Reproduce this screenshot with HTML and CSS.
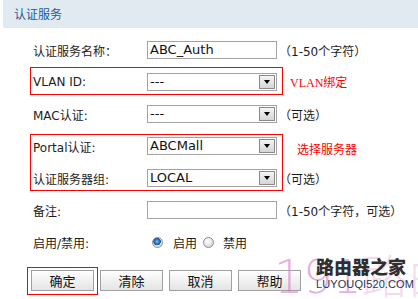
FILE: index.html
```html
<!DOCTYPE html>
<html>
<head>
<meta charset="utf-8">
<link rel="stylesheet" href="styles.css">
</head>
<body>
<div class="page">
  <div class="header">认证服务</div>
  <div class="form">
    <div class="row">
      <span class="label">认证服务名称：</span>
      <span class="field">ABC_Auth</span>
      <span class="note">（1-50个字符）</span>
    </div>
    <div class="row">
      <span class="label">VLAN ID:</span>
      <span class="field select">---<i class="arrow"></i></span>
      <span class="tip tip-vlan"><span class="tip-en">VLAN</span>绑定</span>
    </div>
    <div class="row">
      <span class="label">MAC认证:</span>
      <span class="field select">---<i class="arrow"></i></span>
      <span class="note">（可选）</span>
    </div>
    <div class="row">
      <span class="label">Portal认证:</span>
      <span class="field select">ABCMall<i class="arrow"></i></span>
      <span class="tip tip-server">选择服务器</span>
    </div>
    <div class="row">
      <span class="label">认证服务器组:</span>
      <span class="field select">LOCAL<i class="arrow"></i></span>
      <span class="note">（可选）</span>
    </div>
    <div class="row">
      <span class="label">备注:</span>
      <span class="field"></span>
      <span class="note">（1-50个字符，可选）</span>
    </div>
    <div class="row">
      <span class="label">启用/禁用:</span>
      <span class="radio checked"></span><span class="radio-text">启用</span>
      <span class="radio"></span><span class="radio-text">禁用</span>
    </div>
    <div class="buttons">
      <span class="btn">确定</span>
      <span class="btn">清除</span>
      <span class="btn">取消</span>
      <span class="btn">帮助</span>
    </div>
  </div>
  <div class="mark mark-vlan"></div>
  <div class="mark mark-portal"></div>
  <div class="mark mark-ok"></div>
  <div class="wm">191<span class="wm-cn">路由网</span></div>
  <div class="logo">
    <div class="logo-cn">路由器之家</div>
    <div class="logo-en">LUYOUQI520.COM</div>
  </div>
</div>
</body>
</html>
```
FILE: styles.css
```css
* { box-sizing: border-box; }
html, body { margin: 0; padding: 0; background: #fff; }
body {
  font-family: "DejaVu Sans", "Noto Sans CJK SC", sans-serif;
  font-size: 12px;
  color: #1c1c1c;
}
.page {
  position: relative;
  width: 418px;
  height: 299px;
  overflow: hidden;
}
.header {
  margin-left: 3px;
  height: 28px;
  line-height: 28px;
  padding-left: 11px;
  background: #e2eaf1;
  color: #1f5b94;
  font-family: "Noto Sans CJK SC", sans-serif;
  font-size: 12px;
}
.form {
  display: flex;
  flex-direction: column;
  gap: 14px;
  margin-top: 13px;
}
.row {
  display: flex;
  align-items: center;
  height: 18px;
  padding-left: 33px;
}
.label {
  flex: none;
  width: 114px;
  white-space: nowrap;
}
.field {
  flex: none;
  position: relative;
  width: 130px;
  height: 18px;
  border: 1px solid #a3a3a3;
  background: #fff;
  padding-left: 2px;
  line-height: 16px;
  font-size: 13px;
  color: #111;
}
.arrow {
  position: absolute;
  top: 1px;
  right: 1px;
  width: 16px;
  height: 14px;
  border: 1px solid #8a8a8a;
  background: linear-gradient(#f4f4f4, #d6d6d6);
}
.arrow::after {
  content: "";
  position: absolute;
  left: 4px;
  top: 4px;
  border-left: 3.5px solid transparent;
  border-right: 3.5px solid transparent;
  border-top: 4px solid #000;
}
.note {
  margin-left: 2px;
  white-space: nowrap;
}
.tip {
  color: #f00;
  white-space: nowrap;
  font-family: "Noto Sans CJK SC", sans-serif;
}
.tip-en { font-family: "Liberation Serif", serif; }
.tip-vlan { margin-left: 13px; }
.tip-server { margin-left: 20px; margin-top: 4px; }
.radio {
  flex: none;
  width: 11px;
  height: 11px;
  margin-left: 5px;
  border-radius: 50%;
  border: 1px solid #8d8d8d;
  background: radial-gradient(circle at 40% 35%, #ffffff, #d9d9d9 75%);
}
.radio.checked {
  background: radial-gradient(circle at 45% 40%, #7fc3f2 0, #1f70c4 2.5px, #0f4f96 3.5px, #e8e8e8 4px, #d0d0d0 100%);
}
.radio-text { margin-left: 10px; }
.radio-text + .radio { margin-left: 6px; }
.radio + .radio-text { margin-left: 9px; }
.row .radio.checked + .radio-text { margin-left: 10px; }
.buttons {
  display: flex;
  gap: 6px;
  padding-left: 31px;
  margin-top: 5px;
}
.btn {
  flex: none;
  width: 63px;
  height: 21px;
  border: 1px solid #a0a0a0;
  background: linear-gradient(#fefefe, #e4e4e4);
  text-align: center;
  line-height: 19px;
  font-family: "Noto Sans CJK SC", sans-serif;
  font-size: 13px;
  color: #111;
}
.mark {
  position: absolute;
  border: 1px solid #f00;
}
.mark-vlan { left: 30px; top: 67px; width: 253px; height: 28px; }
.mark-portal { left: 30px; top: 134px; width: 253px; height: 57px; }
.mark-ok { left: 27px; top: 267px; width: 71px; height: 28px; }
.wm {
  position: absolute;
  left: 274px;
  top: 250px;
  font-family: "DejaVu Sans", "Noto Sans CJK SC", sans-serif;
  font-weight: 300;
  font-size: 46px;
  line-height: 54px;
  color: rgba(215, 120, 200, 0.6);
  white-space: nowrap;
}
.wm-cn { color: rgba(225, 150, 210, 0.35); }
.logo {
  position: absolute;
  left: 316px;
  top: 254px;
}
.logo-cn {
  font-family: "Noto Sans CJK SC", sans-serif;
  font-weight: 900;
  font-size: 18px;
  line-height: 24px;
  color: #2e2e2e;
  white-space: nowrap;
}
.logo-en {
  font-family: "Liberation Sans", sans-serif;
  font-size: 11px;
  line-height: 12px;
  color: #2b3550;
  letter-spacing: 0.1px;
  white-space: nowrap;
}
```
